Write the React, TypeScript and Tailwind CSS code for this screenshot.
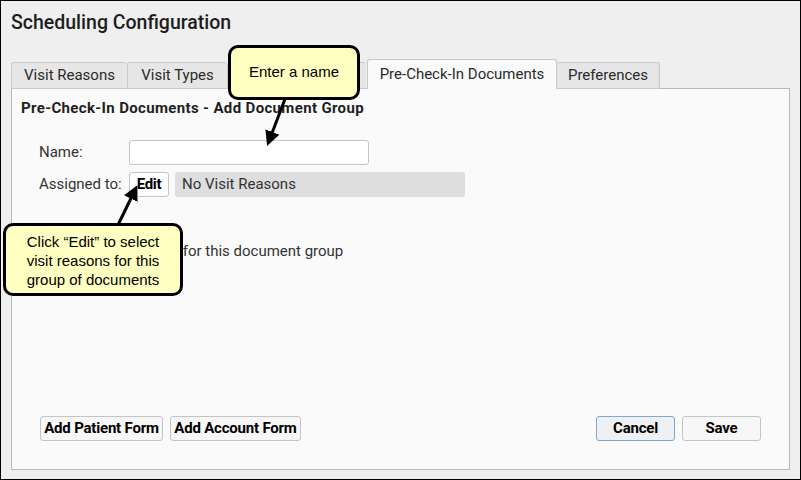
import React from "react";

const tabs = [
  { label: "Visit Reasons", w: "w-[116px]" },
  { label: "Visit Types", w: "w-[100px]" },
  { label: "Scheduling Rules", w: "w-[139px]" },
];

const Callout = ({ className, children }: { className: string; children: React.ReactNode }) => (
  <div
    className={`absolute flex items-center justify-center text-center border-[3px] border-black rounded-[10px] bg-[#ffffc2] text-[15px] leading-[19px] text-black font-['Liberation_Sans',Arial,sans-serif] ${className}`}
  >
    {children}
  </div>
);

export default function App() {
  return (
    <div className="relative w-[801px] h-[480px] border border-black bg-[#efefef] font-['Roboto',sans-serif] text-[#222] overflow-hidden flex flex-col">
      <h1 className="pl-[10px] pt-[7px] h-[51px] text-[19.5px] font-medium text-[#1d1d1d]">Scheduling Configuration</h1>

      {/* tab strip */}
      <div className="flex items-end pl-[10px] h-[36px] relative z-10">
        {tabs.map((t) => (
          <div
            key={t.label}
            className={`${t.w} h-[27px] mb-[-1px] flex items-center justify-center border border-[#c9c9c9] border-r-0 bg-[#e6e6e6] rounded-t-[3px] text-[15px] text-[#2a2a2a]`}
          >
            {t.label}
          </div>
        ))}
        <div className="w-[190px] h-[30px] mb-[-1px] ml-[1px] flex items-center justify-center border border-[#c9c9c9] border-b-[#fafafa] bg-[#fafafa] rounded-t-[3px] text-[15px] text-[#2a2a2a]">
          Pre-Check-In Documents
        </div>
        <div className="w-[103px] h-[27px] mb-[-1px] flex items-center justify-center border border-[#c9c9c9] border-l-0 bg-[#e6e6e6] rounded-t-[3px] text-[15px] text-[#2a2a2a]">
          Preferences
        </div>
      </div>

      {/* panel */}
      <div className="mx-[10px] mb-[9px] flex-1 border border-[#b9b9b9] bg-[#fafafa] flex flex-col pl-[9px] pr-[28px] pt-[10px] pb-[28px]">
        <h2 className="text-[15px] font-bold text-[#1f1f1f] leading-[19px] tracking-[0.35px]">Pre-Check-In Documents - Add Document Group</h2>

        <div className="mt-[22px] pl-[18px] flex flex-col gap-[7px] text-[15px] text-[#333]">
          <div className="flex items-center h-[25px]">
            <span className="w-[90px]">Name:</span>
            <input className="w-[240px] h-[25px] border border-[#c4c4c4] rounded-[3px] bg-white" />
          </div>
          <div className="flex items-center h-[25px]">
            <span className="w-[90px]">Assigned to:</span>
            <button className="w-[40px] h-[25px] border border-[#c4c4c4] rounded-[3px] bg-white text-[15px] font-bold text-black tracking-[-0.3px]">
              Edit
            </button>
            <div className="ml-[6px] w-[290px] h-[25px] rounded-[3px] bg-[#dedede] flex items-center pl-[7px] text-[15px] text-[#333]">
              No Visit Reasons
            </div>
          </div>
        </div>

        <p className="mt-[44px] pl-[13px] text-[15px] leading-[20px] text-[#333]">Select the documents for this document group</p>

        <div className="flex-1" />

        <div className="flex items-center h-[25px] pl-[19px]">
          <button className="w-[123px] h-[25px] border border-[#c4c4c4] rounded-[3px] bg-[#f7f7f7] text-[15px] font-bold text-black tracking-[-0.2px]">
            Add Patient Form
          </button>
          <button className="ml-[7px] w-[131px] h-[25px] border border-[#c4c4c4] rounded-[3px] bg-[#f7f7f7] text-[15px] font-bold text-black tracking-[-0.2px]">
            Add Account Form
          </button>
          <div className="flex-1" />
          <button className="w-[79px] h-[25px] border border-[#7fa7cf] rounded-[3px] bg-[#eef1f4] text-[15px] font-bold text-black tracking-[-0.2px]">
            Cancel
          </button>
          <button className="ml-[7px] w-[79px] h-[25px] border border-[#c4c4c4] rounded-[3px] bg-[#f7f7f7] text-[15px] font-bold text-black tracking-[-0.2px]">
            Save
          </button>
        </div>
      </div>

      {/* annotation arrows */}
      <svg className="absolute left-0 top-0 z-20 pointer-events-none" width="801" height="480">
        <defs>
          <marker id="head" markerWidth="5" markerHeight="5" refX="3.2" refY="2.5" orient="auto" markerUnits="strokeWidth">
            <path d="M0,0 L5,2.5 L0,5 Z" fill="#000" />
          </marker>
        </defs>
        <line x1="284" y1="98" x2="268" y2="140" stroke="#000" strokeWidth="3" markerEnd="url(#head)" />
        <line x1="117" y1="224" x2="134" y2="189" stroke="#000" strokeWidth="3" markerEnd="url(#head)" />
      </svg>

      <Callout className="z-30 left-[227px] top-[44px] w-[132px] h-[55px] pb-[2px]">Enter a name</Callout>
      <Callout className="z-30 left-[2px] top-[222px] w-[180px] h-[73px] pt-[1px]">
        Click “Edit” to select
        <br />
        visit reasons for this
        <br />
        group of documents
      </Callout>
    </div>
  );
}
